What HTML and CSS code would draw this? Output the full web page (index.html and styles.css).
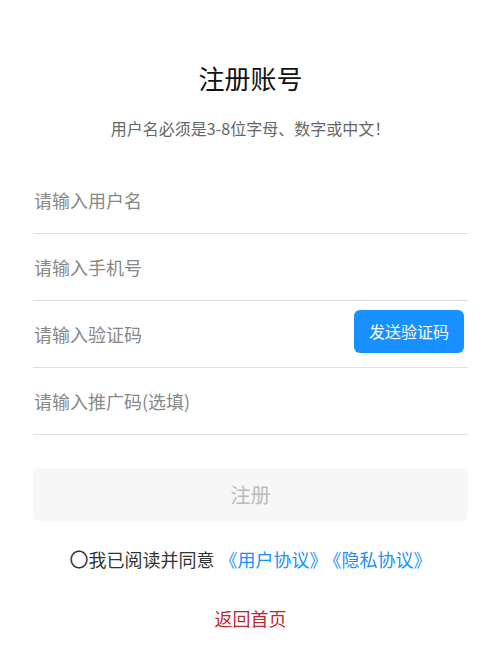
FILE: index.html
```html
<!DOCTYPE html>
<html lang="zh-CN">
<head>
    <meta charset="UTF-8">
    <meta name="viewport" content="width=device-width, initial-scale=1.0">
    <title>注册账号</title>
    <link rel="stylesheet" href="styles.css">
</head>
<body>
    <div class="page">
        <h1 class="title">注册账号</h1>
        <p class="tip">用户名必须是3-8位字母、数字或中文！</p>

        <form class="reg-form">
            <div class="field">
                <input type="text" placeholder="请输入用户名">
            </div>
            <div class="field">
                <input type="tel" placeholder="请输入手机号">
            </div>
            <div class="field">
                <input type="text" placeholder="请输入验证码">
                <button type="button" class="send-btn">发送验证码</button>
            </div>
            <div class="field">
                <input type="text" placeholder="请输入推广码(选填)">
            </div>
            <button type="submit" class="submit-btn">注册</button>
        </form>

        <p class="agree">
            <span class="circle">〇</span>我已阅读并同意<a href="#" class="link">《用户协议》</a><a href="#" class="link">《隐私协议》</a>
        </p>

        <a href="#" class="back">返回首页</a>
    </div>
</body>
</html>
```

FILE: styles.css
```css
body {
    margin: 0;
    background-color: #fff;
    font-family: "Noto Sans CJK SC", "Noto Sans", sans-serif;
    color: #333;
}
.page {
    padding: 0 32px 0 33px;
    text-align: center;
}
.title {
    margin: 0;
    padding-top: 59px;
    font-size: 26px;
    font-weight: normal;
    line-height: 38px;
    color: #111;
}
.tip {
    margin: 20px 0 0;
    font-size: 16px;
    line-height: 22px;
    color: #666;
}
.reg-form {
    margin-top: 28px;
    display: flex;
    flex-direction: column;
}
.field {
    display: flex;
    align-items: center;
    height: 66px;
    border-bottom: 1px solid #dedede;
}
.field input {
    flex: 1;
    min-width: 0;
    border: none;
    outline: none;
    padding: 0 1px;
    font-family: inherit;
    font-size: 18px;
    color: #333;
    background: transparent;
}
.field input::placeholder {
    color: #888;
}
.send-btn {
    width: 110px;
    height: 43px;
    margin: 0 4px 6px 0;
    border: none;
    border-radius: 6px;
    background-color: #1890ff;
    color: #fff;
    font-family: inherit;
    font-size: 16px;
    cursor: pointer;
}
.submit-btn {
    margin-top: 33px;
    height: 53px;
    border: none;
    border-radius: 6px;
    background-color: #f7f7f7;
    color: #bbb;
    font-family: inherit;
    font-size: 20px;
}
.agree {
    margin: 25px 0 0;
    font-size: 18px;
    line-height: 26px;
    color: #333;
}
.circle {
    font-size: 19px;
}
.link {
    margin-left: 5px;
    color: #1890ff;
    text-decoration: none;
}
.back {
    display: inline-block;
    margin-top: 33px;
    font-size: 18px;
    line-height: 26px;
    color: #c0262c;
    text-decoration: none;
}
```
